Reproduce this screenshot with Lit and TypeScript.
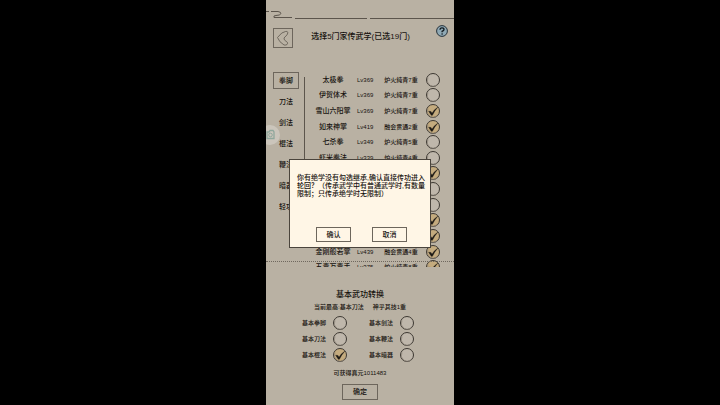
import { LitElement, html, svg, css } from "lit";
import { customElement, property } from "lit/decorators.js";

interface Skill {
  name: string;
  level: string;
  stage: string;
  picked: boolean;
}

const TABS = ["拳脚", "刀法", "剑法", "棍法", "鞭法", "暗器", "轻功"];

const SKILLS: Skill[] = [
  { name: "太极拳", level: "Lv369", stage: "炉火纯青7重", picked: false },
  { name: "伊贺体术", level: "Lv369", stage: "炉火纯青7重", picked: false },
  { name: "雪山六阳掌", level: "Lv369", stage: "炉火纯青7重", picked: true },
  { name: "如来神掌", level: "Lv419", stage: "融会贯通2重", picked: true },
  { name: "七杀拳", level: "Lv349", stage: "炉火纯青5重", picked: false },
  { name: "虾米拳法", level: "Lv339", stage: "炉火纯青4重", picked: false },
  { name: "", level: "", stage: "", picked: true },
  { name: "", level: "", stage: "", picked: false },
  { name: "", level: "", stage: "", picked: false },
  { name: "", level: "", stage: "", picked: true },
  { name: "", level: "", stage: "", picked: true },
  { name: "金刚般若掌", level: "Lv439", stage: "融会贯通4重", picked: true },
  { name: "五毒万毒手", level: "Lv375", stage: "炉火纯青8重", picked: true },
];

const BASICS = [
  { name: "基本拳脚", picked: false },
  { name: "基本剑法", picked: false },
  { name: "基本刀法", picked: false },
  { name: "基本鞭法", picked: false },
  { name: "基本棍法", picked: true },
  { name: "基本暗器", picked: false },
];

@customElement("round-check")
export class RoundCheck extends LitElement {
  @property() label = "";
  @property({ type: Boolean }) checked = false;

  static styles = css`
    :host {
      display: inline-block;
    }
    .box {
      display: flex;
      align-items: center;
      gap: 7px;
      position: relative;
    }
    .tick {
      appearance: none;
      box-sizing: border-box;
      flex: none;
      width: 14px;
      height: 14px;
      margin: 0;
      border: 1px solid #3d3832;
      border-radius: 50%;
      background: #bfb7ab;
    }
    .tick:checked {
      background: #c4ab7e;
    }
    .mark {
      position: absolute;
      right: 0;
      top: 0;
      width: 14px;
      height: 14px;
      pointer-events: none;
    }
  `;

  render() {
    return html`<label class="box">
      ${this.label ? html`<span>${this.label}</span>` : ""}
      <input class="tick" type="checkbox" .checked=${this.checked} />
      <svg class="mark" viewBox="0 0 14 14">
        <path d="M2 4.500A6 6 0 0 0 11 12" fill="none" stroke="#8d8478" stroke-width=".7" />
        ${this.checked
          ? svg`<path d="M2.600 7.200L5 7.500L6 9.200Q8 5.500 11.800 3.200Q8.300 7 6.400 11.300L5.300 11.300Z" fill="#1c1814" stroke="#1c1814" stroke-width=".4" />`
          : ""}
      </svg>
    </label>`;
  }
}

@customElement("app-root")
export class AppRoot extends LitElement {
  static styles = css`
    :host {
      display: flex;
      justify-content: center;
      min-height: 100vh;
      background: #000;
      color: #16120e;
      font-family: "Liberation Sans", "Noto Sans CJK SC", sans-serif;
      font-size: 6px;
      font-weight: 500;
      line-height: 8px;
    }
    .screen {
      position: relative;
      box-sizing: border-box;
      width: max(26vw, 188px);
      padding-bottom: 4px;
      background: #b9b1a3;
      overflow: hidden;
    }
    button {
      box-sizing: border-box;
      margin: 0;
      padding: 0;
      border: 1px solid #6d665c;
      background: none;
      color: inherit;
      font: inherit;
      font-size: 7px;
    }
    .clouds {
      display: block;
      width: 100%;
      height: 24px;
    }
    .top {
      display: grid;
      grid-template-columns: 20px 1fr 20px;
      align-items: start;
      height: 48px;
      padding: 0 6px 0 7px;
    }
    .back {
      width: 20px;
      height: 20px;
      margin-top: 4px;
    }
    .back svg,
    .help svg {
      display: block;
      width: 100%;
      height: 100%;
    }
    .title {
      margin: 8px 0 0;
      font-size: 8px;
      line-height: 10px;
      font-weight: 500;
      text-align: center;
      white-space: nowrap;
    }
    .help {
      justify-self: end;
      width: 12px;
      height: 12px;
      margin-top: 1px;
      border: 0;
    }
    .main {
      display: flex;
      height: 195px;
      overflow: hidden;
    }
    .tabs {
      display: flex;
      flex-direction: column;
      gap: 4px;
      width: 38px;
      box-sizing: border-box;
      padding-left: 7px;
    }
    .tab {
      flex: none;
      width: 26px;
      height: 17px;
      border-color: transparent;
    }
    .tab.on {
      border-color: #6d665c;
    }
    .divider {
      width: 1px;
      height: 130px;
      margin-top: 5px;
      background: #5c554c;
    }
    .list {
      flex: 1;
      padding-right: 13px;
    }
    .skills {
      width: 100%;
      height: 203px;
      border-collapse: collapse;
      table-layout: fixed;
    }
    td {
      padding: 0;
      text-align: center;
      vertical-align: middle;
      white-space: nowrap;
    }
    .name {
      padding-left: 4px;
      font-size: 7px;
    }
    .level {
      width: 16px;
    }
    .stage {
      width: 46px;
      padding-left: 5px;
    }
    .pick {
      width: 17px;
      line-height: 0;
    }
    .rule {
      position: absolute;
      left: 0;
      right: 0;
      top: 261px;
      border-top: 1px dotted #6f685e;
    }
    .basics {
      display: flex;
      flex-direction: column;
      align-items: center;
      padding-top: 23px;
    }
    .heading {
      margin: 0;
      font-size: 8px;
      line-height: 10px;
      font-weight: 500;
    }
    .best {
      display: flex;
      gap: 9px;
      margin: 3px 0 5px;
    }
    .grid {
      display: grid;
      grid-template-columns: auto auto;
      gap: 2px 22px;
      padding-right: 4px;
    }
    .gain {
      margin: 7px 0;
    }
    .ok {
      width: 36px;
      height: 16px;
    }
    .dialog {
      position: absolute;
      left: 23px;
      right: 23px;
      top: 159px;
      box-sizing: border-box;
      height: 89px;
      display: flex;
      flex-direction: column;
      justify-content: space-between;
      padding: 14px 4px 5px 7px;
      border: 1px solid #4a443c;
      background: #fff6e6;
    }
    .message {
      margin: 0;
      font-size: 7px;
    }
    .actions {
      display: flex;
      justify-content: center;
      gap: 21px;
    }
    .actions button {
      width: 35px;
      height: 15px;
    }
    .float {
      position: absolute;
      left: -6px;
      top: 125px;
      width: 20px;
      height: 20px;
      border: 0;
    }
  `;

  render() {
    return html`<div class="screen">
      <svg class="clouds" viewBox="0 0 188 24" preserveAspectRatio="none">
        <path
          d="M0 11.500H3M5 11.500H12Q15 12 15 13.500Q14 15.500 10 15.500Q7 15.500 8 17.500H26M29 18.500H101M104 18.500H188"
          fill="none" stroke="#5c554c" stroke-width="1" />
      </svg>
      <header class="top">
        <button class="back" aria-label="返回">
          <svg viewBox="0 0 18 18">
            <path d="M11.500 2.500Q8 2.500 3.500 8.500Q5 13 10 16Q14 16.500 13.500 13.500Q9 10.500 10 9Q14 5.500 14 3.500Q13 2 11.500 2.500Z"
              fill="none" stroke="#5c554c" stroke-width=".8" />
          </svg>
        </button>
        <h1 class="title">选择5门家传武学(已选19门)</h1>
        <button class="help" aria-label="帮助">
          <svg viewBox="0 0 12 12">
            <circle cx="6" cy="6" r="5.400" fill="#8fa9b5" stroke="#26323a" stroke-width="1" />
            <path d="M4 4.800Q4 2.800 6 2.800Q8 2.800 8 4.500Q8 5.600 6.100 6.300V7.300" fill="none" stroke="#10181d" stroke-width="1.300" />
            <circle cx="6.100" cy="9" r=".8" fill="#10181d" />
          </svg>
        </button>
      </header>

      <section class="main">
        <nav class="tabs">
          ${TABS.map((t, i) => html`<button class="tab ${i === 0 ? "on" : ""}">${t}</button>`)}
        </nav>
        <div class="divider"></div>
        <div class="list">
          <table class="skills">
            <tbody>
              ${SKILLS.map(
                (s) => html`<tr>
                  <td class="name">${s.name}</td>
                  <td class="level">${s.level}</td>
                  <td class="stage">${s.stage}</td>
                  <td class="pick"><round-check ?checked=${s.picked}></round-check></td>
                </tr>`
              )}
            </tbody>
          </table>
        </div>
      </section>
      <div class="rule"></div>

      <section class="basics">
        <h2 class="heading">基本武功转换</h2>
        <p class="best"><span>当前最高:基本刀法</span><span>神乎其技1重</span></p>
        <div class="grid">
          ${BASICS.map((b) => html`<round-check label=${b.name} ?checked=${b.picked}></round-check>`)}
        </div>
        <p class="gain">可获得真元1011483</p>
        <button class="ok">确定</button>
      </section>

      <button class="float" aria-label="悬浮球">
        <svg viewBox="0 0 20 20" width="20" height="20">
          <circle cx="10" cy="10" r="10" fill="#cfcbc0" opacity=".8" />
          <path d="M7 7H9L10 5.500H13L14 7V13.500H7Z" fill="none" stroke="#8fa79c" stroke-width="1.300" />
          <circle cx="10.500" cy="10" r="1.800" fill="none" stroke="#8fa79c" stroke-width="1" />
        </svg>
      </button>

      <div class="dialog" role="dialog" aria-modal="true">
        <p class="message">你有绝学没有勾选继承,确认直接传功进入轮回？（传承武学中有普通武学时,有数量限制；只传承绝学时无限制）</p>
        <div class="actions">
          <button>确认</button>
          <button>取消</button>
        </div>
      </div>
    </div>`;
  }
}
